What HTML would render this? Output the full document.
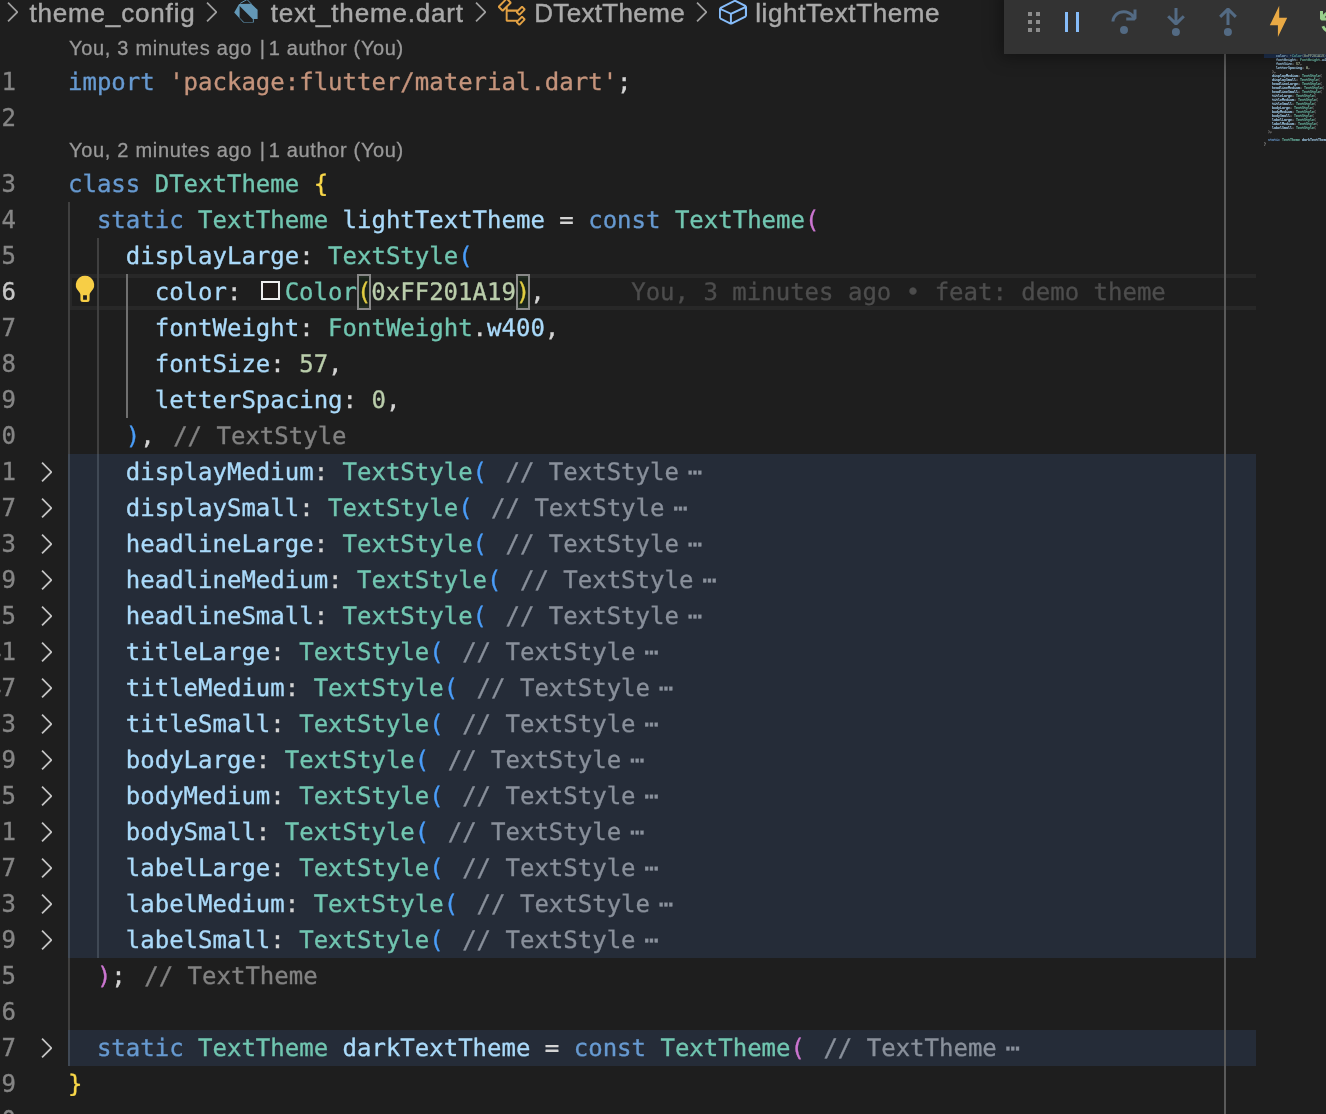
<!DOCTYPE html>
<html lang="en">
<head>
<meta charset="utf-8">
<title>text_theme.dart</title>
<style>
html,body{margin:0;padding:0;background:#1e1e1e;}
body{width:1326px;height:1114px;position:relative;overflow:hidden;font-family:"Liberation Sans",sans-serif;}
#ed{position:absolute;left:0;top:0;width:1326px;height:1114px;overflow:hidden;will-change:transform;-webkit-font-smoothing:antialiased;}
.cl-line,.ln{-webkit-text-stroke:0.35px;}
.lens{-webkit-text-stroke:0.3px;}
.bc{-webkit-text-stroke:0.45px;}
.mono,.cl-line,.ln,.mml{font-family:"DejaVu Sans Mono","Liberation Mono",monospace;font-size:24px;}
.cl-line{position:absolute;left:68px;height:36px;line-height:36px;white-space:pre;color:#d4d4d4;text-rendering:geometricPrecision;}
.ln{position:absolute;left:-60px;width:75.9px;text-align:right;height:36px;line-height:36px;color:#858585;white-space:pre;}
.ln.act{color:#c6c6c6;}
.chev{position:absolute;left:29.8px;margin-top:2.2px;}
.fbg{position:absolute;left:68px;width:1188px;height:36px;background:#252c38;}
.cl{color:#828282;margin:0 4px;}
.cl.f{color:#89909b;}
.fd{color:#8a919c;margin:0 4.8px;}
.blame{color:#4d4d4d;margin-left:72px;}
.sw{display:inline-block;box-sizing:border-box;width:19.2px;height:19.2px;border:2.4px solid #eee;background:#201A19;margin:2.4px 4.8px 0 4.8px;vertical-align:0px;}
.bm{display:inline-block;position:relative;height:36px;vertical-align:top;line-height:36px;}
.bm::before{content:"";position:absolute;left:0;top:0;width:100%;height:36px;box-sizing:border-box;border:2px solid #888;background:rgba(0,100,0,0.1);}
.guide{position:absolute;width:2px;background:#404040;}
.guide.a{background:#707070;}
.guide.f{background:#404955;}
.lens{position:absolute;left:69px;font-size:20px;letter-spacing:0.63px;color:#999;white-space:pre;height:30px;line-height:30px;}
.lens span{position:absolute;top:0;left:0;}
.lens .l2{left:184.5px;}
.lens .l3{left:199.8px;letter-spacing:0.65px;}
.bc{position:absolute;top:-9.3px;height:44px;line-height:44px;font-size:26px;color:#a9a9a9;white-space:pre;}
.bchev{position:absolute;top:-3.8px;}
#curline{position:absolute;left:68px;top:274px;width:1188px;height:36px;box-sizing:border-box;border-top:4px solid #282828;border-bottom:4px solid #282828;border-left:4px solid #282828;}
#ruler{position:absolute;left:1224px;top:0;width:2px;height:1114px;background:#5a5a5a;}
#dbg{position:absolute;left:1004px;top:-10px;width:340px;height:64px;background:#333333;box-shadow:0 0 16px 4px rgba(0,0,0,0.36);}
#dbg svg{position:absolute;top:16px;}
#mm{position:absolute;left:1264px;top:54px;width:62px;height:1060px;overflow:hidden;}
#mmin{transform-origin:0 0;transform:scale(0.13842,0.11111);width:900px;}
.msw{display:inline-block;width:8px;height:18px;margin:0 3.2px;border:2px solid #999;box-sizing:border-box;}
.mml{height:36px;line-height:36px;white-space:pre;color:#d4d4d4;font-weight:bold;}
</style>
</head>
<body>
<div id="ed">
<!-- fold backgrounds, line numbers, code -->
<div id="curline"></div>
<div class="fbg" style="top:454px"></div>
<div class="fbg" style="top:490px"></div>
<div class="fbg" style="top:526px"></div>
<div class="fbg" style="top:562px"></div>
<div class="fbg" style="top:598px"></div>
<div class="fbg" style="top:634px"></div>
<div class="fbg" style="top:670px"></div>
<div class="fbg" style="top:706px"></div>
<div class="fbg" style="top:742px"></div>
<div class="fbg" style="top:778px"></div>
<div class="fbg" style="top:814px"></div>
<div class="fbg" style="top:850px"></div>
<div class="fbg" style="top:886px"></div>
<div class="fbg" style="top:922px"></div>
<div class="fbg" style="top:1030px"></div>
<div class="ln" style="top:64px">1</div>
<div class="cl-line" style="top:64px"><span style="color:#679ad1">import</span> <span style="color:#c5947c">&#x27;package:flutter/material.dart&#x27;</span><span style="color:#d4d4d4">;</span></div>
<div class="ln" style="top:100px">2</div>
<div class="ln" style="top:166px">3</div>
<div class="cl-line" style="top:166px"><span style="color:#679ad1">class</span> <span style="color:#71c6b1">DTextTheme</span> <span style="color:#f9d849">{</span></div>
<div class="ln" style="top:202px">4</div>
<div class="cl-line" style="top:202px">  <span style="color:#679ad1">static</span> <span style="color:#71c6b1">TextTheme</span> <span style="color:#aadafa">lightTextTheme</span><span style="color:#d4d4d4"> = </span><span style="color:#679ad1">const</span> <span style="color:#71c6b1">TextTheme</span><span style="color:#cc76d1">(</span></div>
<div class="ln" style="top:238px">5</div>
<div class="cl-line" style="top:238px">    <span style="color:#aadafa">displayLarge</span><span style="color:#d4d4d4">: </span><span style="color:#71c6b1">TextStyle</span><span style="color:#4a9df8">(</span></div>
<div class="ln act" style="top:274px">6</div>
<div class="cl-line" style="top:274px">      <span style="color:#aadafa">color</span><span style="color:#d4d4d4">: </span><span class="sw"></span><span style="color:#71c6b1">Color</span><span class="bm"><span style="color:#f9d849">(</span></span><span style="color:#bacdab">0xFF201A19</span><span class="bm"><span style="color:#f9d849">)</span></span><span style="color:#d4d4d4">,</span><span class="blame"> You, 3 minutes ago • feat: demo theme</span></div>
<div class="ln" style="top:310px">7</div>
<div class="cl-line" style="top:310px">      <span style="color:#aadafa">fontWeight</span><span style="color:#d4d4d4">: </span><span style="color:#71c6b1">FontWeight</span><span style="color:#d4d4d4">.</span><span style="color:#aadafa">w400</span><span style="color:#d4d4d4">,</span></div>
<div class="ln" style="top:346px">8</div>
<div class="cl-line" style="top:346px">      <span style="color:#aadafa">fontSize</span><span style="color:#d4d4d4">: </span><span style="color:#bacdab">57</span><span style="color:#d4d4d4">,</span></div>
<div class="ln" style="top:382px">9</div>
<div class="cl-line" style="top:382px">      <span style="color:#aadafa">letterSpacing</span><span style="color:#d4d4d4">: </span><span style="color:#bacdab">0</span><span style="color:#d4d4d4">,</span></div>
<div class="ln" style="top:418px">10</div>
<div class="cl-line" style="top:418px">    <span style="color:#4a9df8">)</span><span style="color:#d4d4d4">,</span><span class="cl"> // TextStyle</span></div>
<div class="ln" style="top:454px">11</div>
<svg class="chev" style="top:454px" width="32" height="32" viewBox="0 0 16 16"><path d="M10.072 8.024L5.715 3.667l.618-.62L11 7.716v.618L6.333 13l-.618-.619 4.357-4.357z" fill="#c5c5c5"/></svg>
<div class="cl-line" style="top:454px">    <span style="color:#aadafa">displayMedium</span><span style="color:#d4d4d4">: </span><span style="color:#71c6b1">TextStyle</span><span style="color:#4a9df8">(</span><span class="cl f"> // TextStyle</span><span class="fd">⋯</span></div>
<div class="ln" style="top:490px">17</div>
<svg class="chev" style="top:490px" width="32" height="32" viewBox="0 0 16 16"><path d="M10.072 8.024L5.715 3.667l.618-.62L11 7.716v.618L6.333 13l-.618-.619 4.357-4.357z" fill="#c5c5c5"/></svg>
<div class="cl-line" style="top:490px">    <span style="color:#aadafa">displaySmall</span><span style="color:#d4d4d4">: </span><span style="color:#71c6b1">TextStyle</span><span style="color:#4a9df8">(</span><span class="cl f"> // TextStyle</span><span class="fd">⋯</span></div>
<div class="ln" style="top:526px">23</div>
<svg class="chev" style="top:526px" width="32" height="32" viewBox="0 0 16 16"><path d="M10.072 8.024L5.715 3.667l.618-.62L11 7.716v.618L6.333 13l-.618-.619 4.357-4.357z" fill="#c5c5c5"/></svg>
<div class="cl-line" style="top:526px">    <span style="color:#aadafa">headlineLarge</span><span style="color:#d4d4d4">: </span><span style="color:#71c6b1">TextStyle</span><span style="color:#4a9df8">(</span><span class="cl f"> // TextStyle</span><span class="fd">⋯</span></div>
<div class="ln" style="top:562px">29</div>
<svg class="chev" style="top:562px" width="32" height="32" viewBox="0 0 16 16"><path d="M10.072 8.024L5.715 3.667l.618-.62L11 7.716v.618L6.333 13l-.618-.619 4.357-4.357z" fill="#c5c5c5"/></svg>
<div class="cl-line" style="top:562px">    <span style="color:#aadafa">headlineMedium</span><span style="color:#d4d4d4">: </span><span style="color:#71c6b1">TextStyle</span><span style="color:#4a9df8">(</span><span class="cl f"> // TextStyle</span><span class="fd">⋯</span></div>
<div class="ln" style="top:598px">35</div>
<svg class="chev" style="top:598px" width="32" height="32" viewBox="0 0 16 16"><path d="M10.072 8.024L5.715 3.667l.618-.62L11 7.716v.618L6.333 13l-.618-.619 4.357-4.357z" fill="#c5c5c5"/></svg>
<div class="cl-line" style="top:598px">    <span style="color:#aadafa">headlineSmall</span><span style="color:#d4d4d4">: </span><span style="color:#71c6b1">TextStyle</span><span style="color:#4a9df8">(</span><span class="cl f"> // TextStyle</span><span class="fd">⋯</span></div>
<div class="ln" style="top:634px">41</div>
<svg class="chev" style="top:634px" width="32" height="32" viewBox="0 0 16 16"><path d="M10.072 8.024L5.715 3.667l.618-.62L11 7.716v.618L6.333 13l-.618-.619 4.357-4.357z" fill="#c5c5c5"/></svg>
<div class="cl-line" style="top:634px">    <span style="color:#aadafa">titleLarge</span><span style="color:#d4d4d4">: </span><span style="color:#71c6b1">TextStyle</span><span style="color:#4a9df8">(</span><span class="cl f"> // TextStyle</span><span class="fd">⋯</span></div>
<div class="ln" style="top:670px">47</div>
<svg class="chev" style="top:670px" width="32" height="32" viewBox="0 0 16 16"><path d="M10.072 8.024L5.715 3.667l.618-.62L11 7.716v.618L6.333 13l-.618-.619 4.357-4.357z" fill="#c5c5c5"/></svg>
<div class="cl-line" style="top:670px">    <span style="color:#aadafa">titleMedium</span><span style="color:#d4d4d4">: </span><span style="color:#71c6b1">TextStyle</span><span style="color:#4a9df8">(</span><span class="cl f"> // TextStyle</span><span class="fd">⋯</span></div>
<div class="ln" style="top:706px">53</div>
<svg class="chev" style="top:706px" width="32" height="32" viewBox="0 0 16 16"><path d="M10.072 8.024L5.715 3.667l.618-.62L11 7.716v.618L6.333 13l-.618-.619 4.357-4.357z" fill="#c5c5c5"/></svg>
<div class="cl-line" style="top:706px">    <span style="color:#aadafa">titleSmall</span><span style="color:#d4d4d4">: </span><span style="color:#71c6b1">TextStyle</span><span style="color:#4a9df8">(</span><span class="cl f"> // TextStyle</span><span class="fd">⋯</span></div>
<div class="ln" style="top:742px">59</div>
<svg class="chev" style="top:742px" width="32" height="32" viewBox="0 0 16 16"><path d="M10.072 8.024L5.715 3.667l.618-.62L11 7.716v.618L6.333 13l-.618-.619 4.357-4.357z" fill="#c5c5c5"/></svg>
<div class="cl-line" style="top:742px">    <span style="color:#aadafa">bodyLarge</span><span style="color:#d4d4d4">: </span><span style="color:#71c6b1">TextStyle</span><span style="color:#4a9df8">(</span><span class="cl f"> // TextStyle</span><span class="fd">⋯</span></div>
<div class="ln" style="top:778px">65</div>
<svg class="chev" style="top:778px" width="32" height="32" viewBox="0 0 16 16"><path d="M10.072 8.024L5.715 3.667l.618-.62L11 7.716v.618L6.333 13l-.618-.619 4.357-4.357z" fill="#c5c5c5"/></svg>
<div class="cl-line" style="top:778px">    <span style="color:#aadafa">bodyMedium</span><span style="color:#d4d4d4">: </span><span style="color:#71c6b1">TextStyle</span><span style="color:#4a9df8">(</span><span class="cl f"> // TextStyle</span><span class="fd">⋯</span></div>
<div class="ln" style="top:814px">71</div>
<svg class="chev" style="top:814px" width="32" height="32" viewBox="0 0 16 16"><path d="M10.072 8.024L5.715 3.667l.618-.62L11 7.716v.618L6.333 13l-.618-.619 4.357-4.357z" fill="#c5c5c5"/></svg>
<div class="cl-line" style="top:814px">    <span style="color:#aadafa">bodySmall</span><span style="color:#d4d4d4">: </span><span style="color:#71c6b1">TextStyle</span><span style="color:#4a9df8">(</span><span class="cl f"> // TextStyle</span><span class="fd">⋯</span></div>
<div class="ln" style="top:850px">77</div>
<svg class="chev" style="top:850px" width="32" height="32" viewBox="0 0 16 16"><path d="M10.072 8.024L5.715 3.667l.618-.62L11 7.716v.618L6.333 13l-.618-.619 4.357-4.357z" fill="#c5c5c5"/></svg>
<div class="cl-line" style="top:850px">    <span style="color:#aadafa">labelLarge</span><span style="color:#d4d4d4">: </span><span style="color:#71c6b1">TextStyle</span><span style="color:#4a9df8">(</span><span class="cl f"> // TextStyle</span><span class="fd">⋯</span></div>
<div class="ln" style="top:886px">83</div>
<svg class="chev" style="top:886px" width="32" height="32" viewBox="0 0 16 16"><path d="M10.072 8.024L5.715 3.667l.618-.62L11 7.716v.618L6.333 13l-.618-.619 4.357-4.357z" fill="#c5c5c5"/></svg>
<div class="cl-line" style="top:886px">    <span style="color:#aadafa">labelMedium</span><span style="color:#d4d4d4">: </span><span style="color:#71c6b1">TextStyle</span><span style="color:#4a9df8">(</span><span class="cl f"> // TextStyle</span><span class="fd">⋯</span></div>
<div class="ln" style="top:922px">89</div>
<svg class="chev" style="top:922px" width="32" height="32" viewBox="0 0 16 16"><path d="M10.072 8.024L5.715 3.667l.618-.62L11 7.716v.618L6.333 13l-.618-.619 4.357-4.357z" fill="#c5c5c5"/></svg>
<div class="cl-line" style="top:922px">    <span style="color:#aadafa">labelSmall</span><span style="color:#d4d4d4">: </span><span style="color:#71c6b1">TextStyle</span><span style="color:#4a9df8">(</span><span class="cl f"> // TextStyle</span><span class="fd">⋯</span></div>
<div class="ln" style="top:958px">95</div>
<div class="cl-line" style="top:958px">  <span style="color:#cc76d1">)</span><span style="color:#d4d4d4">;</span><span class="cl"> // TextTheme</span></div>
<div class="ln" style="top:994px">96</div>
<div class="ln" style="top:1030px">97</div>
<svg class="chev" style="top:1030px" width="32" height="32" viewBox="0 0 16 16"><path d="M10.072 8.024L5.715 3.667l.618-.62L11 7.716v.618L6.333 13l-.618-.619 4.357-4.357z" fill="#c5c5c5"/></svg>
<div class="cl-line" style="top:1030px">  <span style="color:#679ad1">static</span> <span style="color:#71c6b1">TextTheme</span> <span style="color:#aadafa">darkTextTheme</span><span style="color:#d4d4d4"> = </span><span style="color:#679ad1">const</span> <span style="color:#71c6b1">TextTheme</span><span style="color:#cc76d1">(</span><span class="cl f"> // TextTheme</span><span class="fd">⋯</span></div>
<div class="ln" style="top:1066px">179</div>
<div class="cl-line" style="top:1066px"><span style="color:#f9d849">}</span></div>
<div class="ln" style="top:1102px">180</div>
<!-- indent guides -->
<div class="guide" style="left:68px;top:202px;height:864px"></div>
<div class="guide" style="left:97px;top:238px;height:720px"></div>
<div class="guide a" style="left:126px;top:274px;height:144px"></div>
<div class="guide f" style="left:68px;top:454px;height:504px"></div>
<div class="guide f" style="left:97px;top:454px;height:504px"></div>
<div class="guide f" style="left:68px;top:1030px;height:36px"></div>
<div id="ruler"></div>
<!-- code lens -->
<div class="lens" style="top:32.8px"><span style="letter-spacing:0.7px">You, 3 minutes ago</span><span class="l2"> | </span><span class="l3">1 author (You)</span></div>
<div class="lens" style="top:134.8px"><span style="letter-spacing:0.7px">You, 2 minutes ago</span><span class="l2"> | </span><span class="l3">1 author (You)</span></div>
<!-- lightbulb -->
<svg style="position:absolute;left:69px;top:274px" width="32" height="36" viewBox="0 0 32 36"><path d="M16 1.7 A9.1 9.1 0 0 0 9.57 17.23 C10.6 18.4 11.4 19.6 11.4 21 V25.6 A2.5 2.5 0 0 0 13.9 28.1 H18.1 A2.5 2.5 0 0 0 20.6 25.6 V21 C20.6 19.6 21.4 18.4 22.43 17.23 A9.1 9.1 0 0 0 16 1.7 Z M14.1 21.3 H17.9 V25.8 H14.1 Z" fill="#f7ce46" fill-rule="evenodd"/></svg>
<!-- minimap -->
<div style="position:absolute;left:1264px;top:54px;width:62px;height:4px;background:#1f3150"></div>
<div id="mm"><div id="mmin">
<div class="mml">      <span style="color:#aadafa">color</span><span style="color:#d4d4d4">: </span><span class="msw"></span><span style="color:#71c6b1">Color</span><span><span style="color:#b0b0b0">(</span></span><span style="color:#bacdab">0xFF201A19</span><span><span style="color:#b0b0b0">)</span></span><span style="color:#d4d4d4">,</span></div>
<div class="mml">      <span style="color:#aadafa">fontWeight</span><span style="color:#d4d4d4">: </span><span style="color:#71c6b1">FontWeight</span><span style="color:#d4d4d4">.</span><span style="color:#aadafa">w400</span><span style="color:#d4d4d4">,</span></div>
<div class="mml">      <span style="color:#aadafa">fontSize</span><span style="color:#d4d4d4">: </span><span style="color:#bacdab">57</span><span style="color:#d4d4d4">,</span></div>
<div class="mml">      <span style="color:#aadafa">letterSpacing</span><span style="color:#d4d4d4">: </span><span style="color:#bacdab">0</span><span style="color:#d4d4d4">,</span></div>
<div class="mml">    <span style="color:#b0b0b0">)</span><span style="color:#d4d4d4">,</span></div>
<div class="mml">    <span style="color:#aadafa">displayMedium</span><span style="color:#d4d4d4">: </span><span style="color:#71c6b1">TextStyle</span><span style="color:#b0b0b0">(</span></div>
<div class="mml">    <span style="color:#aadafa">displaySmall</span><span style="color:#d4d4d4">: </span><span style="color:#71c6b1">TextStyle</span><span style="color:#b0b0b0">(</span></div>
<div class="mml">    <span style="color:#aadafa">headlineLarge</span><span style="color:#d4d4d4">: </span><span style="color:#71c6b1">TextStyle</span><span style="color:#b0b0b0">(</span></div>
<div class="mml">    <span style="color:#aadafa">headlineMedium</span><span style="color:#d4d4d4">: </span><span style="color:#71c6b1">TextStyle</span><span style="color:#b0b0b0">(</span></div>
<div class="mml">    <span style="color:#aadafa">headlineSmall</span><span style="color:#d4d4d4">: </span><span style="color:#71c6b1">TextStyle</span><span style="color:#b0b0b0">(</span></div>
<div class="mml">    <span style="color:#aadafa">titleLarge</span><span style="color:#d4d4d4">: </span><span style="color:#71c6b1">TextStyle</span><span style="color:#b0b0b0">(</span></div>
<div class="mml">    <span style="color:#aadafa">titleMedium</span><span style="color:#d4d4d4">: </span><span style="color:#71c6b1">TextStyle</span><span style="color:#b0b0b0">(</span></div>
<div class="mml">    <span style="color:#aadafa">titleSmall</span><span style="color:#d4d4d4">: </span><span style="color:#71c6b1">TextStyle</span><span style="color:#b0b0b0">(</span></div>
<div class="mml">    <span style="color:#aadafa">bodyLarge</span><span style="color:#d4d4d4">: </span><span style="color:#71c6b1">TextStyle</span><span style="color:#b0b0b0">(</span></div>
<div class="mml">    <span style="color:#aadafa">bodyMedium</span><span style="color:#d4d4d4">: </span><span style="color:#71c6b1">TextStyle</span><span style="color:#b0b0b0">(</span></div>
<div class="mml">    <span style="color:#aadafa">bodySmall</span><span style="color:#d4d4d4">: </span><span style="color:#71c6b1">TextStyle</span><span style="color:#b0b0b0">(</span></div>
<div class="mml">    <span style="color:#aadafa">labelLarge</span><span style="color:#d4d4d4">: </span><span style="color:#71c6b1">TextStyle</span><span style="color:#b0b0b0">(</span></div>
<div class="mml">    <span style="color:#aadafa">labelMedium</span><span style="color:#d4d4d4">: </span><span style="color:#71c6b1">TextStyle</span><span style="color:#b0b0b0">(</span></div>
<div class="mml">    <span style="color:#aadafa">labelSmall</span><span style="color:#d4d4d4">: </span><span style="color:#71c6b1">TextStyle</span><span style="color:#b0b0b0">(</span></div>
<div class="mml">  <span style="color:#b0b0b0">)</span><span style="color:#d4d4d4">;</span></div>
<div class="mml"></div>
<div class="mml">  <span style="color:#679ad1">static</span> <span style="color:#71c6b1">TextTheme</span> <span style="color:#aadafa">darkTextTheme</span><span style="color:#d4d4d4"> = </span><span style="color:#679ad1">const</span> <span style="color:#71c6b1">TextTheme</span><span style="color:#b0b0b0">(</span></div>
<div class="mml"><span style="color:#b0b0b0">}</span></div>
</div></div>
<!-- breadcrumbs -->
<svg class="bchev" style="left:-3.9px" width="32" height="32" viewBox="0 0 16 16"><path d="M10.072 8.024L5.715 3.667l.618-.62L11 7.716v.618L6.333 13l-.618-.619 4.357-4.357z" fill="#a0a0a0"/></svg>
<div class="bc" style="left:29.4px;letter-spacing:0.84px">theme_config</div>
<svg class="bchev" style="left:194.8px" width="32" height="32" viewBox="0 0 16 16"><path d="M10.072 8.024L5.715 3.667l.618-.62L11 7.716v.618L6.333 13l-.618-.619 4.357-4.357z" fill="#a0a0a0"/></svg>
<svg style="position:absolute;left:230px;top:0" width="32" height="26" viewBox="230 0 32 26"><polygon points="239.1,4.1 251.2,3.8 257.6,9.8 257.6,18.9 253.8,18.9 253.8,22.6 243.3,22.6 234.2,12.4" fill="#6398b7"/><polygon points="239.6,6 252.9,19.2 252.9,21.9 243.9,21.9 239.6,17.7" fill="#1e1e1e"/><polyline points="240.2,3.4 247,-0.5 251.2,3.8" fill="none" stroke="#6398b7" stroke-width="1"/></svg>
<div class="bc" style="left:270.8px;letter-spacing:0.83px">text_theme.dart</div>
<svg class="bchev" style="left:463.9px" width="32" height="32" viewBox="0 0 16 16"><path d="M10.072 8.024L5.715 3.667l.618-.62L11 7.716v.618L6.333 13l-.618-.619 4.357-4.357z" fill="#a0a0a0"/></svg>
<svg style="position:absolute;left:496.4px;top:-3.8px" width="32" height="32" viewBox="0 0 16 16"><path fill="#e2a144" d="M11.34 9.71h.71l2.67-2.67v-.71L13.38 5h-.7l-1.82 1.81h-5V5.56l1.86-1.85V3l-2-2H5L1 5v.71l2 2h.71l1.14-1.15v5.79l.5.5H10v.52l1.33 1.34h.71l2.67-2.67v-.71L13.37 10h-.7l-1.86 1.85h-5v-4H10v.48l1.34 1.38zm1.69-3.65l.63.63-2 2-.63-.63 2-2zm0 5l.63.63-2 2-.63-.63 2-2zM3.35 6.65l-1.29-1.3 3.29-3.29 1.3 1.29-3.3 3.3z"/></svg>
<div class="bc" style="left:534.2px;letter-spacing:0.34px">DTextTheme</div>
<svg class="bchev" style="left:685.3px" width="32" height="32" viewBox="0 0 16 16"><path d="M10.072 8.024L5.715 3.667l.618-.62L11 7.716v.618L6.333 13l-.618-.619 4.357-4.357z" fill="#a0a0a0"/></svg>
<svg style="position:absolute;left:717px;top:-3.9px" width="32" height="32" viewBox="0 0 16 16"><path fill="#86bcf9" d="M14.45 4.5l-5-2.5h-.9l-7 3.5-.55.89v4.5l.55.9 5 2.5h.9l7-3.5.55-.9v-4.5l-.55-.89zm-8 8.64l-4.5-2.25V7.17l4.5 2v3.97zm.5-4.8L2.29 6.23l6.66-3.34 4.67 2.34-6.67 3.11zm7 1.55l-6.5 3.25V9.21l6.5-3v3.68z"/></svg>
<div class="bc" style="left:755.2px;letter-spacing:0.62px">lightTextTheme</div>
<!-- debug toolbar -->
<div id="dbg">
<svg style="left:14px" width="32" height="32" viewBox="0 0 16 16"><path fill="#8c8c8c" d="M5 3h2v2H5zm0 4h2v2H5zm0 4h2v2H5zm4-8h2v2H9zm0 4h2v2H9zm0 4h2v2H9z"/></svg>
<svg style="left:52px" width="32" height="32" viewBox="0 0 16 16"><path fill="#86bcf9" d="M4.5 3H6v10H4.5V3zm7 0v10H10V3h1.5z"/></svg>
<svg style="left:104px" width="32" height="32" viewBox="0 0 16 16"><path fill="#536a83" fill-rule="evenodd" d="M14.25 5.75v-4h-1.5v2.542c-1.145-1.359-2.911-2.209-4.84-2.209-3.177 0-5.92 2.307-6.16 5.398l-.02.269h1.501l.022-.226c.212-2.195 2.202-3.94 4.656-3.94 1.736 0 3.244.875 4.05 2.166h-2.83v1.5h4.163l.962-.975V5.75h-.004zM8 14a2 2 0 1 0 0-4 2 2 0 0 0 0 4z"/></svg>
<svg style="left:156px" width="32" height="32" viewBox="0 0 16 16"><path fill="#536a83" fill-rule="evenodd" d="M8 9.532h.542l3.905-3.905-1.061-1.06-2.637 2.61V1H7.251v6.177l-2.637-2.61-1.061 1.06 3.905 3.905H8zm1.956 3.481a2 2 0 1 1-4 0 2 2 0 0 1 4 0z"/></svg>
<svg style="left:208px" width="32" height="32" viewBox="0 0 16 16"><path fill="#536a83" fill-rule="evenodd" d="M8 1h-.542L3.553 4.905l1.061 1.06 2.637-2.61v6.177h1.498V3.355l2.637 2.61 1.061-1.06L8.542 1H8zm1.956 12.013a2 2 0 1 1-4 0 2 2 0 0 1 4 0z"/></svg>
<svg style="left:260px;top:10px" width="32" height="44" viewBox="1264 0 32 44"><polygon points="1279.2,5.8 1279.2,17.7 1287.2,17.7 1277.9,37 1277.9,25.3 1269.8,25.3" fill="#e9a944"/></svg>
<svg style="left:312px" width="32" height="32" viewBox="0 0 16 16"><path fill="#99cf8c" fill-rule="evenodd" d="M12.75 8a4.5 4.5 0 0 1-8.61 1.834l-1.391.565A6.001 6.001 0 0 0 14.25 8 6 6 0 0 0 3.500 4.334V2.500H2v4l.75.75h3.500v-1.500H4.352A4.500 4.500 0 0 1 12.750 8z"/></svg>
</div>
</div>
</body>
</html>
